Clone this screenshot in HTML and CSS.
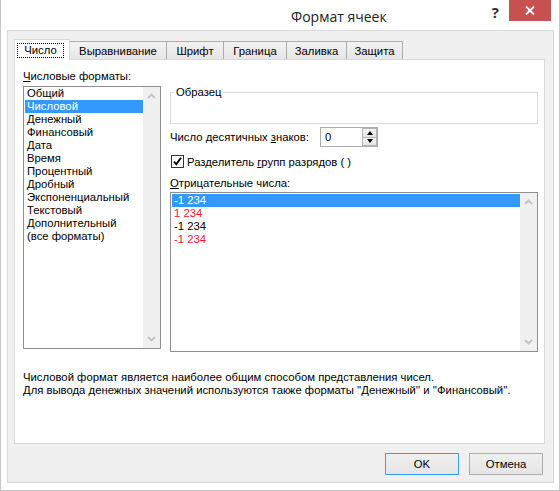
FILE: index.html
```html
<!DOCTYPE html>
<html lang="ru">
<head>
<meta charset="utf-8">
<title>Формат ячеек</title>
<link rel="stylesheet" href="styles.css">
</head>
<body>
<div class="window">
  <div class="titlebar">
    <span class="title">Формат ячеек</span>
    <span class="help">?</span>
    <span class="close">
      <svg width="10" height="9" viewBox="0 0 10 9"><path d="M1 0.5 L9 8.5 M9 0.5 L1 8.5" stroke="#fff" stroke-width="1.8" fill="none"/></svg>
    </span>
  </div>
  <div class="frame">
    <div class="tabs">
      <div class="tab active"><span class="focus">Число</span></div>
      <div class="tab tab-align">Выравнивание</div>
      <div class="tab tab-font">Шрифт</div>
      <div class="tab tab-border">Граница</div>
      <div class="tab tab-fill">Заливка</div>
      <div class="tab tab-protect">Защита</div>
    </div>
    <div class="panel">
      <div class="columns">
        <div class="col-left">
          <div class="label"><u>Ч</u>исловые форматы:</div>
          <div class="listbox formats">
            <ul class="items">
              <li>Общий</li>
              <li class="sel">Числовой</li>
              <li>Денежный</li>
              <li>Финансовый</li>
              <li>Дата</li>
              <li>Время</li>
              <li>Процентный</li>
              <li>Дробный</li>
              <li>Экспоненциальный</li>
              <li>Текстовый</li>
              <li>Дополнительный</li>
              <li>(все форматы)</li>
            </ul>
            <div class="scrollbar">
              <svg class="chev" width="9" height="6" viewBox="0 0 9 6"><path d="M1 5 L4.5 1.5 L8 5" stroke="#c2c2c2" stroke-width="1.8" fill="none"/></svg>
              <svg class="chev" width="9" height="6" viewBox="0 0 9 6"><path d="M1 1 L4.5 4.5 L8 1" stroke="#c2c2c2" stroke-width="1.8" fill="none"/></svg>
            </div>
          </div>
        </div>
        <div class="col-right">
          <div class="group"><div class="group-label">Образец</div></div>
          <div class="decimals">
            <span class="dec-label">Число десятичных <u>з</u>наков:</span>
            <div class="spinner">
              <span class="spin-value">0</span>
              <div class="spin-buttons">
                <span class="spin-btn"><span class="tri-up"></span></span>
                <span class="spin-btn"><span class="tri-down"></span></span>
              </div>
            </div>
          </div>
          <div class="check-row">
            <span class="checkbox">
              <svg width="11" height="11" viewBox="0 0 11 11"><path d="M2 5.5 L4.3 8.3 L9 1.8" stroke="#000" stroke-width="1.9" fill="none"/></svg>
            </span>
            <span>Разделитель <u>г</u>рупп разрядов ( )</span>
          </div>
          <div class="label neg-label"><u>О</u>трицательные числа:</div>
          <div class="listbox negatives">
            <ul class="items items-neg">
              <li class="sel">-1 234</li>
              <li class="red">1 234</li>
              <li>-1 234</li>
              <li class="red">-1 234</li>
            </ul>
            <div class="scrollbar">
              <svg class="chev" width="9" height="6" viewBox="0 0 9 6"><path d="M1 5 L4.5 1.5 L8 5" stroke="#c2c2c2" stroke-width="1.8" fill="none"/></svg>
              <svg class="chev" width="9" height="6" viewBox="0 0 9 6"><path d="M1 1 L4.5 4.5 L8 1" stroke="#c2c2c2" stroke-width="1.8" fill="none"/></svg>
            </div>
          </div>
        </div>
      </div>
      <div class="desc">
        <p>Числовой формат является наиболее общим способом представления чисел.</p>
        <p>Для вывода денежных значений используются также форматы ''Денежный'' и ''Финансовый''.</p>
      </div>
    </div>
    <div class="buttons">
      <button class="btn btn-default">OK</button>
      <button class="btn">Отмена</button>
    </div>
  </div>
</div>
</body>
</html>
```
FILE: styles.css
```css
* { box-sizing: border-box; }
html, body { margin: 0; padding: 0; }
body {
  width: 560px;
  height: 491px;
  overflow: hidden;
  background: #fff;
  font-family: "Liberation Sans", Arial, sans-serif;
  font-size: 11.3px;
  color: #000;
}
.window {
  width: 560px;
  height: 491px;
  border: 1px solid #c6c6c6;
  border-top: none;
  padding-bottom: 7px;
}
.titlebar {
  height: 30px;
  display: flex;
  align-items: flex-start;
}
.title {
  margin: 7px 0 0 290px;
  font-family: "Open Sans", "Noto Sans", sans-serif;
  font-size: 14px;
  line-height: 19px;
  color: #222;
  white-space: nowrap;
}
.help {
  margin: 3px 0 0 auto;
  font-family: "Open Sans", "Noto Sans", sans-serif;
  font-weight: bold;
  font-size: 15px;
  line-height: 18px;
  color: #333;
}
.close {
  width: 42px;
  height: 21px;
  margin: 0 8px 0 10px;
  background: #c75050;
  display: flex;
  align-items: center;
  justify-content: center;
}
.frame {
  height: 453px;
  margin: 0 5px 0 6px;
  border: 1px solid #d9d9d9;
  background: #f0f0f0;
}
.tabs {
  position: relative;
  z-index: 1;
  display: flex;
  align-items: flex-end;
  height: 21px;
  margin: 8px 0 -1px 6px;
}
.tab {
  height: 18px;
  margin-bottom: 1px;
  border: 1px solid #acacac;
  border-left: none;
  border-bottom: none;
  background: linear-gradient(#f2f2f2, #e6e6e6);
  text-align: center;
  line-height: 14px;
  padding-top: 2px;
  white-space: nowrap;
}
.tab-align { width: 97px; }
.tab-font { width: 57px; }
.tab-border { width: 63px; }
.tab-fill { width: 60px; }
.tab-protect { width: 56px; }
.tab.active {
  width: 56px;
  height: 21px;
  margin-bottom: 0;
  border: 1px solid #d9d9d9;
  border-bottom: none;
  background: #fff;
  padding: 3px 0 0 2px;
  display: flex;
  align-items: flex-start;
}
.focus {
  width: 47px;
  height: 15px;
  border: 1px dotted #000;
  line-height: 13px;
  text-align: center;
}
.panel {
  height: 385px;
  margin: 0 8px 0 6px;
  border: 1px solid #d9d9d9;
  background: #fff;
  padding: 10px 6px 0 8px;
}
.columns {
  display: grid;
  grid-template-columns: 138px 368px;
  column-gap: 9px;
}
.label {
  height: 13px;
  line-height: 13px;
  white-space: nowrap;
}
.listbox {
  display: flex;
  border: 1px solid #8e8f94;
  background: #fff;
}
.formats {
  margin-top: 3px;
  height: 263px;
}
.items {
  flex: 1;
  list-style: none;
  margin: 0;
  padding: 0 0 0 1px;
}
.items li {
  height: 13px;
  line-height: 13px;
  padding-left: 2px;
  white-space: nowrap;
}
.items-neg { padding-top: 1px; }
.items li.sel {
  background: #3399ff;
  color: #fff;
}
.items li.red { color: #ee1530; }
.scrollbar {
  width: 17px;
  flex: none;
  background: #f0f0f0;
  display: flex;
  flex-direction: column;
  justify-content: space-between;
  align-items: center;
  padding: 6px 0;
}
.chev { display: block; }
.group {
  margin-top: 22px;
  height: 32px;
  border: 1px solid #dcdcdc;
}
.group-label {
  width: fit-content;
  margin: -7px 0 0 4px;
  padding: 0 1px;
  background: #fff;
  line-height: 13px;
}
.decimals {
  display: flex;
  align-items: center;
  margin-top: 3px;
  height: 20px;
}
.dec-label {
  flex: none;
  width: 150px;
  white-space: nowrap;
}
.spinner {
  width: 58px;
  height: 20px;
  border: 1px solid #abadb3;
  display: flex;
  justify-content: space-between;
  padding-left: 4px;
}
.spin-value { line-height: 18px; }
.spin-buttons {
  width: 15px;
  display: flex;
  flex-direction: column;
}
.spin-btn {
  flex: 1;
  border: 1px solid #b4b4b4;
  background: linear-gradient(#f4f4f4, #e4e4e4);
  display: flex;
  align-items: center;
  justify-content: center;
}
.spin-btn + .spin-btn { border-top: none; }
.tri-up {
  width: 0; height: 0;
  border-left: 3.5px solid transparent;
  border-right: 3.5px solid transparent;
  border-bottom: 4px solid #000;
}
.tri-down {
  width: 0; height: 0;
  border-left: 3.5px solid transparent;
  border-right: 3.5px solid transparent;
  border-top: 4px solid #000;
}
.check-row {
  display: flex;
  align-items: center;
  margin-top: 8px;
  height: 13px;
  white-space: nowrap;
}
.checkbox {
  flex: none;
  width: 13px;
  height: 13px;
  margin: 0 3px 0 1px;
  border: 1px solid #333;
  background: #fff;
  display: flex;
}
.neg-label { margin-top: 9px; }
.negatives {
  margin-top: 2px;
  height: 160px;
}
.desc { margin-top: 19px; }
.desc p {
  margin: 0;
  line-height: 13px;
  white-space: nowrap;
}
.buttons {
  display: flex;
  justify-content: flex-end;
  gap: 10px;
  margin: 9px 10px 0 0;
}
.btn {
  width: 74px;
  height: 22px;
  padding: 0;
  border: 1px solid #adadad;
  background: linear-gradient(#f0f0f0, #e5e5e5);
  font: inherit;
  color: #000;
}
.btn-default { border-color: #3c9af0; }
```
